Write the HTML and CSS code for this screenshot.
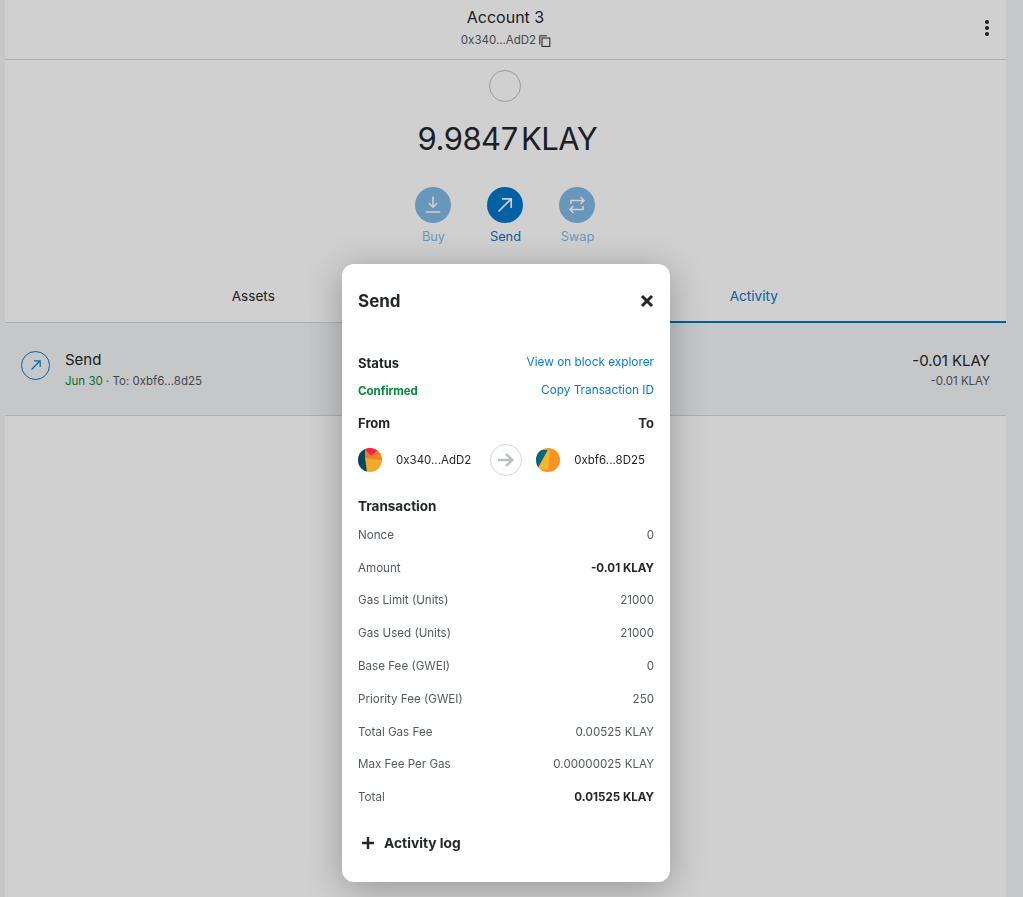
FILE: index.html
```html
<!DOCTYPE html>
<html lang="en">
<head>
    <meta charset="UTF-8">
    <title>Account 3</title>
    <link rel="stylesheet" href="styles.css">
</head>
<body>

<div class="page">
    <header class="account">
        <div class="account-name">Account 3</div>
        <div class="account-address">
            <span>0x340...AdD2</span>
            <svg class="copy-icon" width="12" height="12" viewBox="0 0 12 12" fill="none" stroke="#24272a" stroke-width="1">
                <path d="M0.8 9.5V0.8H8"/>
                <rect x="3" y="3" width="7.8" height="8.4"/>
            </svg>
        </div>
        <svg class="menu-icon" width="4" height="16" viewBox="0 0 4 16" fill="#24272a">
            <circle cx="2" cy="2" r="2"/>
            <circle cx="2" cy="8" r="2"/>
            <circle cx="2" cy="14" r="2"/>
        </svg>
    </header>

    <section class="overview">
        <div class="token-circle"></div>
        <div class="balance">9.9847 KLAY</div>
        <div class="actions">
            <div class="action disabled">
                <div class="action-circle">
                    <svg width="20" height="20" viewBox="0 0 20 20" fill="none" stroke="#fff" stroke-width="1.6">
                        <path d="M10 1.5V12M5.8 8L10 12.2L14.2 8M2.8 17H17.2"/>
                    </svg>
                </div>
                <span>Buy</span>
            </div>
            <div class="action">
                <div class="action-circle">
                    <svg width="20" height="20" viewBox="0 0 20 20" fill="none" stroke="#fff" stroke-width="1.7">
                        <path d="M3.5 16.5L16 4M7 3.8H16.2V13"/>
                    </svg>
                </div>
                <span>Send</span>
            </div>
            <div class="action disabled">
                <div class="action-circle">
                    <svg width="20" height="20" viewBox="0 0 20 20" fill="none" stroke="#fff" stroke-width="1.6">
                        <path d="M4 9V5.5H16M13.5 2L17 5.5L13.5 9M16 11V14.5H4M6.5 11L3 14.5L6.5 18"/>
                    </svg>
                </div>
                <span>Swap</span>
            </div>
        </div>
    </section>

    <nav class="tabs">
        <div class="tab">Assets</div>
        <div class="tab active">Activity</div>
    </nav>

    <div class="list-item">
        <div class="list-icon">
            <svg width="14" height="14" viewBox="0 0 14 14" fill="none" stroke="#037dd6" stroke-width="1.2">
                <path d="M2.5 11.5L11 3M5 2.8H11.2V9"/>
            </svg>
        </div>
        <div class="list-text">
            <div class="list-title">Send</div>
            <div class="list-sub"><span class="green">Jun 30 &middot;</span> To: 0xbf6...8d25</div>
        </div>
        <div class="list-amounts">
            <div class="amount-main">-0.01 KLAY</div>
            <div class="amount-sub">-0.01 KLAY</div>
        </div>
    </div>
</div>

<div class="overlay"></div>

<div class="modal">
    <div class="modal-head">
        <h2>Send</h2>
        <svg class="close-icon" width="14" height="14" viewBox="0 0 14 14" fill="none" stroke="#24272a" stroke-width="3">
            <path d="M2 2L12 12M12 2L2 12"/>
        </svg>
    </div>

    <div class="status-grid">
        <strong>Status</strong>
        <a class="link">View on block explorer</a>
        <strong class="confirmed">Confirmed</strong>
        <a class="link">Copy Transaction ID</a>
    </div>

    <div class="from-to">
        <strong>From</strong>
        <strong>To</strong>
    </div>

    <div class="parties">
        <svg class="identicon" width="24" height="24" viewBox="0 0 24 24">
            <clipPath id="clipA"><circle cx="12" cy="12" r="12"/></clipPath>
            <g clip-path="url(#clipA)">
                <rect width="24" height="24" fill="#f5a82e"/>
                <polygon points="0,0 7,0 7,10 9,24 0,24" fill="#03465f"/>
                <polygon points="7,0 21,0 20,2 13,8 7,2" fill="#f6204f"/>
                <polygon points="13,8 20,2 24,6 24,12 12,11" fill="#f58220"/>
                <polygon points="7,2 13,8 12,11 7,10" fill="#ee7f1d"/>
            </g>
        </svg>
        <span class="party-address">0x340...AdD2</span>
        <div class="arrow-circle">
            <svg width="18" height="16" viewBox="0 0 18 16" fill="none" stroke="#bbc0c5" stroke-width="2.4">
                <path d="M1 8H15M9 2L15.4 8L9 14"/>
            </svg>
        </div>
        <svg class="identicon" width="24" height="24" viewBox="0 0 24 24">
            <clipPath id="clipB"><circle cx="12" cy="12" r="12"/></clipPath>
            <g clip-path="url(#clipB)">
                <rect width="24" height="24" fill="#fb9224"/>
                <polygon points="0,2 12,2 2,20 0,20" fill="#03697f"/>
                <polygon points="7,0 14,3 12,22 2,20 12,2" fill="#f3b72c"/>
            </g>
        </svg>
        <span class="party-address">0xbf6...8D25</span>
    </div>

    <h3>Transaction</h3>

    <div class="tx-rows">
        <div class="tx-row"><span>Nonce</span><span>0</span></div>
        <div class="tx-row"><span>Amount</span><b>-0.01 KLAY</b></div>
        <div class="tx-row"><span>Gas Limit (Units)</span><span>21000</span></div>
        <div class="tx-row"><span>Gas Used (Units)</span><span>21000</span></div>
        <div class="tx-row"><span>Base Fee (GWEI)</span><span>0</span></div>
        <div class="tx-row"><span>Priority Fee (GWEI)</span><span>250</span></div>
        <div class="tx-row"><span>Total Gas Fee</span><span>0.00525 KLAY</span></div>
        <div class="tx-row"><span>Max Fee Per Gas</span><span>0.00000025 KLAY</span></div>
        <div class="tx-row"><span>Total</span><b>0.01525 KLAY</b></div>
    </div>

    <div class="activity-log">
        <svg width="14" height="14" viewBox="0 0 14 14" fill="none" stroke="#24272a" stroke-width="2.4">
            <path d="M7 1V13M1 7H13"/>
        </svg>
        <span>Activity log</span>
    </div>
</div>

</body>
</html>
```

FILE: styles.css
```css
* {
    box-sizing: border-box;
}
html, body {
    height: 100%;
}
body {
    margin: 0;
    background: #f2f4f6;
    color: #24272a;
    font-family: 'Inter', 'Liberation Sans', sans-serif;
    overflow: hidden;
}
.page {
    width: 1001px;
    height: 100%;
    margin-left: 5px;
    background: #fff;
}

/* account header */
.account {
    position: relative;
    height: 60px;
    border-bottom: 1px solid #d6d9dc;
    display: flex;
    flex-direction: column;
    align-items: center;
    padding-top: 7px;
}
.account-name {
    font-size: 16px;
    line-height: 20px;
}
.account-address {
    display: flex;
    align-items: center;
    gap: 3px;
    margin-top: 5px;
    margin-left: 1px;
    font-size: 11.5px;
    line-height: 16px;
    color: #535a61;
}
.copy-icon {
    margin-top: 1px;
}
.menu-icon {
    position: absolute;
    right: 17px;
    top: 20px;
}

/* balance + buttons */
.overview {
    height: 203px;
    display: flex;
    flex-direction: column;
    align-items: center;
    padding-top: 10px;
    padding-right: 2px;
}
.token-circle {
    width: 32px;
    height: 32px;
    border: 1px solid #bbc0c5;
    border-radius: 50%;
}
.balance {
    margin-top: 16px;
    margin-left: 6px;
    font-size: 31px;
    line-height: 42px;
    letter-spacing: -0.5px;
    word-spacing: -5px;
}
.actions {
    display: flex;
    gap: 22px;
    margin-top: 27px;
}
.action {
    width: 50px;
    display: flex;
    flex-direction: column;
    align-items: center;
    color: #0376c9;
    font-size: 12.8px;
    line-height: 18px;
}
.action span {
    margin-top: 5px;
    margin-left: 2px;
}
.action.disabled {
    opacity: 0.5;
}
.action-circle {
    width: 36px;
    height: 36px;
    border-radius: 50%;
    background: #0376c9;
    display: flex;
    align-items: center;
    justify-content: center;
}

/* tabs */
.tabs {
    display: flex;
    height: 60px;
}
.tab {
    flex: 1;
    padding-right: 4px;
    text-align: center;
    font-size: 13.6px;
    line-height: 66px;
    border-bottom: 1px solid #d6d9dc;
}
.tab.active {
    color: #0376c9;
    border-bottom: 2px solid #0376c9;
}

/* transaction row */
.list-item {
    height: 93px;
    display: flex;
    align-items: center;
    padding: 0 16px;
    background: #f2f4f6;
    border-bottom: 1px solid #d6d9dc;
}
.list-icon {
    width: 29px;
    height: 29px;
    border: 1px solid #037dd6;
    border-radius: 50%;
    display: flex;
    align-items: center;
    justify-content: center;
    margin-top: -8px;
}
.list-text {
    margin-left: 15px;
    flex: 1;
}
.list-title {
    font-size: 15px;
    line-height: 22px;
    position: relative;
    top: 1px;
}
.list-sub {
    font-size: 11.5px;
    line-height: 18px;
    margin-top: 2px;
    color: #535a61;
}
.green {
    color: #028a37;
}
.list-amounts {
    text-align: right;
}
.amount-main {
    font-size: 15px;
    line-height: 22px;
    position: relative;
    top: 2px;
}
.amount-sub {
    font-size: 11.5px;
    line-height: 18px;
    margin-top: 2px;
    color: #535a61;
}

/* overlay + modal */
.overlay {
    position: fixed;
    inset: 0;
    background: rgba(0, 0, 0, 0.185);
}
.modal {
    position: absolute;
    left: 342px;
    top: 264px;
    width: 328px;
    height: 618px;
    padding: 0 16px;
    background: #fff;
    border-radius: 12px;
    box-shadow: 0 6px 36px rgba(0, 0, 0, 0.28);
}
.modal-head {
    display: flex;
    justify-content: space-between;
    align-items: center;
    height: 74px;
}
.modal-head h2 {
    margin: 0;
    font-size: 17px;
    font-weight: 700;
}
.status-grid {
    display: grid;
    grid-template-columns: auto auto;
    justify-content: space-between;
    row-gap: 10px;
    margin-top: 16px;
    font-size: 12px;
    line-height: 18px;
}
.status-grid strong {
    font-size: 13px;
}
.status-grid .confirmed {
    font-size: 11.5px;
    color: #028a37;
}
.link {
    text-align: right;
    color: #037dd6;
    font-size: 11.8px;
    position: relative;
    top: -1px;
}
.from-to {
    display: flex;
    justify-content: space-between;
    margin-top: 14px;
    font-size: 13px;
    line-height: 18px;
}
.parties {
    display: flex;
    align-items: center;
    margin-top: 12px;
    height: 32px;
    font-size: 11.5px;
}
.party-address {
    margin-left: 14px;
}
.arrow-circle {
    width: 32px;
    height: 32px;
    margin: 0 14px 0 19px;
    border: 1px solid #d6d9dc;
    border-radius: 50%;
    display: flex;
    align-items: center;
    justify-content: center;
    flex: none;
}
h3 {
    margin: 21px 0 0;
    font-size: 13.5px;
    line-height: 18px;
    font-weight: 700;
}
.tx-rows {
    margin-top: 3.4px;
}
.tx-row {
    display: flex;
    justify-content: space-between;
    align-items: center;
    height: 32.8px;
    font-size: 11.6px;
    color: #535a61;
}
.tx-row b {
    color: #24272a;
}
.activity-log {
    display: flex;
    align-items: center;
    gap: 9px;
    margin-top: 21.6px;
    padding-left: 3px;
    font-size: 13.8px;
    font-weight: 700;
}
```
